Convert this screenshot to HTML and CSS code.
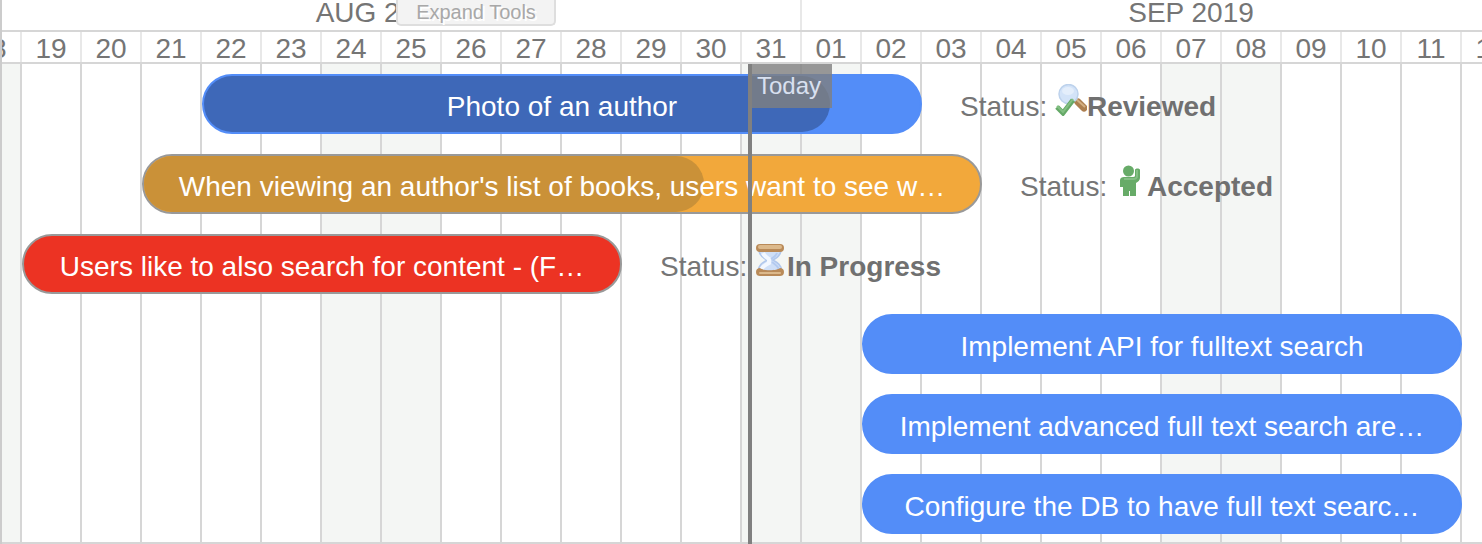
FILE: index.html
```html
<!DOCTYPE html>
<html lang="en">
<head>
<meta charset="utf-8">
<title>Timeline</title>
<link rel="stylesheet" href="styles.css">
</head>
<body>
<main class="timeline">
  <button class="expand" type="button">Expand Tools</button>
  <header class="track months">
    <div class="month">AUG 2019</div>
    <div class="month">SEP 2019</div>
  </header>
  <div class="track days">
    <div>18</div><div>19</div><div>20</div><div>21</div><div>22</div><div>23</div><div>24</div><div>25</div><div>26</div>
    <div>27</div><div>28</div><div>29</div><div>30</div><div>31</div><div>01</div><div>02</div><div>03</div><div>04</div>
    <div>05</div><div>06</div><div>07</div><div>08</div><div>09</div><div>10</div><div>11</div><div>12</div><div>13</div>
  </div>
  <section class="track chart">
    <div class="columns">
      <i class="off"></i><i></i><i></i><i></i><i></i><i></i><i class="off"></i><i class="off"></i><i></i>
      <i></i><i></i><i></i><i></i><i class="off"></i><i class="off"></i><i></i><i></i><i></i>
      <i></i><i></i><i class="off"></i><i class="off"></i><i></i><i></i><i></i><i></i><i></i>
    </div>

    <div class="bar blue photo"><span class="progress" style="width:87.4%"></span><span class="label">Photo of an author</span></div>
    <div class="status photo-status">Status: <svg class="icon" viewBox="0 0 32 32" aria-hidden="true">
      <path d="M18 14l10 10" stroke="#b08558" stroke-width="5" fill="none"/>
      <path d="M23 18l6 6" stroke="#ad7f50" stroke-width="7" stroke-linecap="round" fill="none"/>
      <path d="M21 15l9 8" stroke="#d3b083" stroke-width="2" fill="none"/>
      <circle cx="13.500" cy="10" r="9.500" fill="#d3e3f8" stroke="#bdd2ec" stroke-width="1.500"/>
      <ellipse cx="13" cy="7" rx="6" ry="4" fill="#e4eefb"/>
      <path d="M2 23l6 6 10-13" fill="none" stroke="#66a968" stroke-width="5"/>
      <path d="M2 22l6 6 10-13" fill="none" stroke="#83c083" stroke-width="2"/>
    </svg><b>Reviewed</b></div>

    <div class="bar orange outlined viewing"><span class="progress" style="width:67%"></span><span class="label">When viewing an author's list of books, users want to see w…</span></div>
    <div class="status viewing-status">Status: <svg class="icon" viewBox="0 0 32 32" aria-hidden="true">
      <circle cx="13.500" cy="7" r="5.500" fill="#67ab68"/>
      <path d="M20 6c0-2 5-2 5 0v8c0 2-2 4-4 5v13h-6v-5h-1v5H8v-9H5v-7c0-2 2-3 4-3h9c2 0 2-1 2-2z" fill="#67ab68"/>
      <path d="M9 15h9c3 0 4-1 4-3V6" fill="none" stroke="#83bf83" stroke-width="2"/>
    </svg><b>Accepted</b></div>

    <div class="bar red outlined users"><span class="label">Users like to also search for content - (F…</span></div>
    <div class="status users-status">Status: <svg class="icon" viewBox="0 0 32 32" aria-hidden="true">
      <path d="M4 7c1 5 4 7 8 9-5 3-8 5-9 11h24c-1-6-4-8-9-11 4-2 7-4 8-9z" fill="#cfdff7" stroke="#b0c7ec" stroke-width="1.500"/>
      <path d="M8 9c1 3 3 4 6 6v4c-4 2-7 4-8 7" fill="none" stroke="#f2f7ff" stroke-width="4"/>
      <path d="M22 9c-1 3-3 4-6 6M17 18c3 2 6 4 7 8" fill="none" stroke="#b3caf0" stroke-width="2"/>
      <rect x="1" y="0" width="28" height="8" rx="4" fill="#b98a58"/>
      <rect x="3" y="1" width="24" height="4" rx="2" fill="#dcb98b"/>
      <path d="M1 28c0-3 2-4 4-4 3 3 17 3 20 0 2 0 4 1 4 4s-2 4-4 4H5c-2 0-4-1-4-4z" fill="#b98a58"/>
      <rect x="4" y="28" width="22" height="2" rx="1" fill="#dcb98b"/>
    </svg><b>In Progress</b></div>

    <div class="bar blue api"><span class="label">Implement API for fulltext search</span></div>
    <div class="bar blue advanced"><span class="label">Implement advanced full text search are…</span></div>
    <div class="bar blue database"><span class="label">Configure the DB to have full text searc…</span></div>

    <div class="today"><span class="today-label">Today</span></div>
  </section>
</main>
</body>
</html>
```

FILE: styles.css
```css
* {
  box-sizing: border-box;
}

body {
  margin: 0;
  background: #fff;
  color: #757575;
  font-family: "Liberation Sans", Arial, sans-serif;
  font-size: 28px;
}

.timeline {
  position: relative;
  overflow: hidden;
  border-left: 2px solid #ccc;
}

/* Every track shares the 60px day columns; the first day is scrolled partly out of view. */
.track {
  display: grid;
  grid-template-columns: repeat(27, 60px);
  margin-left: -40px;
}

.months {
  border-bottom: 2px solid #d6d6d6;
}

.month {
  grid-column: span 13;
  padding-bottom: 4px;
  border-right: 2px solid #e8e8e8;
  line-height: 26px;
  text-align: center;
}

.month:first-child {
  grid-column: span 14;
}

.days {
  border-bottom: 2px solid #d6d6d6;
  line-height: 26px;
  text-align: center;
}

.days div {
  padding-top: 4px;
  border-right: 2px solid #e8e8e8;
}

.chart {
  grid-template-rows: repeat(6, 80px);
}

.columns {
  grid-area: 1 / 1 / 7 / 28;
  display: grid;
  grid-template-columns: subgrid;
}

.columns i {
  border-right: 2px solid #d6d6d6;
  border-bottom: 2px solid #d6d6d6;
}

.columns .off {
  background: #f4f6f4;
}

.bar {
  position: relative;
  margin: 10px 0;
  border: 2px solid transparent;
  border-radius: 30px;
  color: #fff;
  line-height: 62px;
  text-align: center;
  white-space: nowrap;
}

.label {
  position: relative;
}

.progress {
  position: absolute;
  top: 0;
  bottom: 0;
  left: 0;
  border-radius: 28px;
}

.blue {
  border-color: #538df8;
  background: #538df8;
}

.blue .progress {
  background: #3e68b8;
}

.orange {
  background: #f2a83b;
}

.orange .progress {
  background: #ca9138;
}

.red {
  background: #ec3323;
}

.outlined {
  border-color: #999;
}

.status {
  padding-left: 38px;
  line-height: 86px;
  white-space: nowrap;
}

.status b {
  color: #707070;
}

.icon {
  width: 32px;
  height: 32px;
  vertical-align: baseline;
}

.photo { grid-area: 1 / 5 / 2 / 17; }
.photo-status { grid-area: 1 / 17 / 2 / 23; }
.viewing { grid-area: 2 / 4 / 3 / 18; }
.viewing-status { grid-area: 2 / 18 / 3 / 24; }
.users { grid-area: 3 / 2 / 4 / 12; }
.users-status { grid-area: 3 / 12 / 4 / 18; }
.api { grid-area: 4 / 16 / 5 / 26; }
.advanced { grid-area: 5 / 16 / 6 / 26; }
.database { grid-area: 6 / 16 / 7 / 26; }

.today {
  z-index: 1;
  grid-area: 1 / 14 / 7 / 16;
  justify-self: start;
  margin-left: 6px;
  border-left: 4px solid #808080;
}

.today-label {
  display: block;
  width: 80px;
  padding-left: 5px;
  background: #808080;
  color: #fff;
  font-size: 24px;
  line-height: 44px;
  opacity: 0.8;
}

.expand {
  position: absolute;
  top: 0;
  left: 394px;
  z-index: 2;
  width: 160px;
  height: 26px;
  padding: 0;
  border: 2px solid #dedede;
  border-top: 0;
  border-radius: 0 0 5px 5px;
  background: #f3f3f3;
  color: #a8a8a8;
  font-family: inherit;
  font-size: 20px;
  line-height: 22px;
  text-shadow: 2px 2px 0 #fff;
}
```
